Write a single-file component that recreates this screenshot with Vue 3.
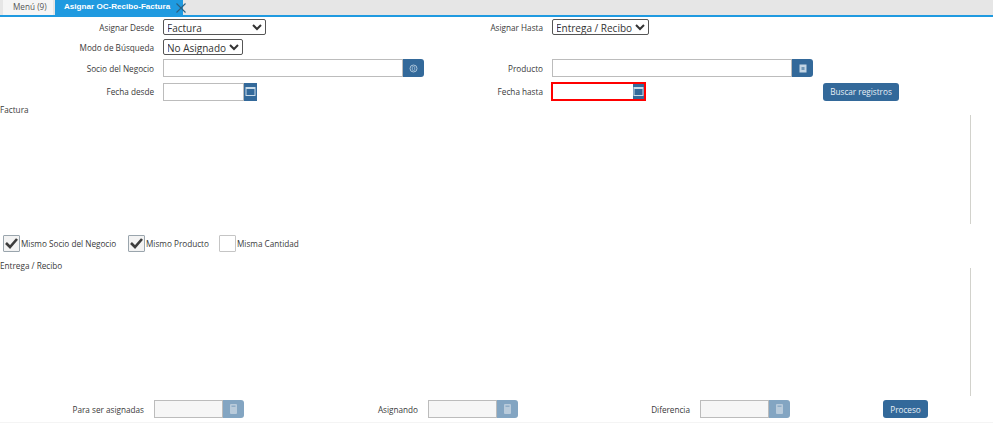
<script setup>
const totals = [
  { label: 'Para ser asignadas', cls: 'w1' },
  { label: 'Asignando', cls: 'w2' },
  { label: 'Diferencia', cls: 'w3' }
]
const checks = [
  { label: 'Mismo Socio del Negocio', on: true },
  { label: 'Mismo Producto', on: true },
  { label: 'Misma Cantidad', on: false }
]
</script>

<template>
  <div class="page">
    <div class="tabs">
      <div class="tab">Menú (9)</div>
      <div class="tab active">
        Asignar OC-Recibo-Factura
        <svg class="close" width="10" height="10" viewBox="0 0 10 10"><path d="M.5.5l9 9M9.5.5l-9 9" stroke="#2c5f80" stroke-width="1.1" fill="none" /></svg>
      </div>
    </div>

    <div class="form">
      <div class="row r1">
        <label>Asignar Desde</label>
        <div class="cell"><select class="s1"><option>Factura</option></select></div>
        <label>Asignar Hasta</label>
        <div class="cell"><select class="s3"><option>Entrega / Recibo</option></select></div>
      </div>
      <div class="row r2">
        <label>Modo de Búsqueda</label>
        <div class="cell"><select class="s2"><option>No Asignado</option></select></div>
      </div>
      <div class="row r3">
        <label>Socio del Negocio</label>
        <div class="cell">
          <input class="in long" />
          <button class="ib wide">
            <svg width="9" height="9" viewBox="0 0 9 9"><circle cx="4.5" cy="4.5" r="3.5" fill="none" stroke="#a9c3d9" /><rect x="3.3" y="2.5" width="2.4" height="4" rx="1" fill="none" stroke="#a9c3d9" stroke-width=".8" /></svg>
          </button>
        </div>
        <label>Producto</label>
        <div class="cell">
          <input class="in long" />
          <button class="ib wide">
            <svg width="8" height="9" viewBox="0 0 8 9"><rect x="0.5" y="0.5" width="7" height="8" fill="#c3d5e4" /><rect x="2.5" y="3" width="3" height="3" fill="#6f97b8" /></svg>
          </button>
        </div>
      </div>
      <div class="row r4">
        <label>Fecha desde</label>
        <div class="cell">
          <input class="in date" />
          <button class="ib cal">
            <svg width="11" height="11" viewBox="0 0 11 11"><rect x="1" y="1.5" width="9" height="8" fill="none" stroke="#c9dbe9" /><rect x="1" y="1.5" width="9" height="1.5" fill="#c9dbe9" /></svg>
          </button>
        </div>
        <label>Fecha hasta</label>
        <div class="cell">
          <div class="focus">
            <input class="in bare" />
            <button class="ib cal">
              <svg width="11" height="11" viewBox="0 0 11 11"><rect x="1" y="1.5" width="9" height="8" fill="none" stroke="#c9dbe9" /><rect x="1" y="1.5" width="9" height="1.5" fill="#c9dbe9" /></svg>
            </button>
          </div>
        </div>
        <button class="btn search">Buscar registros</button>
      </div>
    </div>

    <div class="title t1">Factura</div>
    <div class="grid g1"></div>

    <div class="checks">
      <div v-for="c in checks" :key="c.label" class="check">
        <span class="box" :class="{ on: c.on }">
          <svg v-if="c.on" width="15" height="15" viewBox="0 0 15 15"><path d="M2 7l4 4 7-8" fill="none" stroke="#3c3c3c" stroke-width="2.6" /></svg>
        </span>
        <span>{{ c.label }}</span>
      </div>
    </div>

    <div class="title t2">Entrega / Recibo</div>
    <div class="grid g2"></div>

    <div class="totals">
      <template v-for="t in totals" :key="t.label">
        <label :class="t.cls">{{ t.label }}</label>
        <div class="total">
          <input class="in sum" disabled />
          <button class="ib wide dim">
            <svg width="7" height="10" viewBox="0 0 7 10"><rect x="0" y="0" width="7" height="10" rx="1" fill="#b9cbdb" /><rect x="1.5" y="1.5" width="4" height="1.5" fill="#8fadc7" /></svg>
          </button>
        </div>
      </template>
      <button class="btn process">Proceso</button>
    </div>
  </div>
</template>

<style>
body { margin: 0; background: #fff; }
</style>

<style scoped>
.page {
  width: 993px;
  height: 426px;
  overflow: hidden;
  font-family: "Open Sans", "Noto Sans", sans-serif;
  font-size: 8.2px;
  color: #3a3a3a;
  background: #fff;
  box-sizing: border-box;
}
.tabs {
  display: flex;
  align-items: flex-end;
  height: 15px;
  padding-left: 3px;
  background: #e6e6e6;
  border-bottom: 2px solid #1f9ae0;
  gap: 2px;
}
.tab {
  height: 15px;
  line-height: 14px;
  padding: 0 7px 0 10px;
  background: #f5f5f5;
  color: #555;
  width: 33px;
  white-space: nowrap;
}
.tab.active {
  position: relative;
  width: 110px;
  padding: 0 9px;
  background: #1f9ae0;
  color: #fff;
  font-weight: 700;
  font-size: 8.1px;
  font-family: "Liberation Sans", sans-serif;
}
.close { position: absolute; left: 121px; top: 3px; }
.form { padding-top: 2px; }
.row {
  display: grid;
  grid-template-columns: 154px 276px 113px 280px 1fr;
  align-items: center;
}
.r1 { height: 16px; }
.r2 { height: 16px; margin-top: 4px; }
.r3 { height: 18px; margin-top: 4px; }
.r4 { height: 18px; margin-top: 5px; }
.row label { text-align: right; white-space: nowrap; }
.cell { display: flex; align-items: center; padding-left: 9px; }
select {
  height: 16px;
  box-sizing: border-box;
  padding: 0;
  border: 1px solid #555;
  border-radius: 2px;
  background: #fff;
  color: #333;
  text-indent: -1px;
  font: 10px/14px "Open Sans", sans-serif;
}
.s1 { width: 103px; }
.s2 { width: 80px; }
.s3 { width: 97px; }
.in {
  box-sizing: border-box;
  height: 18px;
  padding: 0;
  border: 1px solid #bcbcbc;
  background: #fff;
  outline: none;
}
.long { width: 240px; }
.date { width: 81px; }
.ib {
  display: flex;
  align-items: center;
  justify-content: center;
  height: 18px;
  padding: 0;
  border: 0;
  background: #33699a;
  border-radius: 0 3px 3px 0;
}
.wide { width: 21px; }
.cal { width: 13px; border-radius: 0; }
.focus {
  display: flex;
  box-sizing: border-box;
  width: 95px;
  height: 19px;
  margin-left: -1px;
  border: 2px solid #f00;
}
.focus .bare { width: 80px; height: 15px; border: 0; }
.focus .ib { height: 15px; }
.btn {
  height: 18px;
  padding: 0;
  border: 0;
  border-radius: 3px;
  background: #33699a;
  color: #e8f0f6;
  font: 8.2px "Open Sans", sans-serif;
}
.search { width: 76px; }
.process { width: 45px; margin-left: 93px; }
.title { height: 12px; line-height: 12px; white-space: nowrap; }
.t1 { margin-top: 4px; }
.grid { width: 970px; border-right: 1px solid #d2d2cc; }
.g1 { height: 109px; margin-top: -1px; }
.checks { display: flex; height: 17px; margin-top: 11px; padding-left: 3px; }
.check { display: flex; align-items: center; gap: 1px; }
.check:nth-child(1) { width: 125px; }
.check:nth-child(2) { width: 91px; }
.box {
  display: flex;
  box-sizing: border-box;
  width: 17px;
  height: 17px;
  align-items: center;
  justify-content: center;
  border: 1px solid #c5c5c5;
  border-radius: 1px;
  background: #fff;
}
.box.on { border-color: #9aa5ad; background: #f3f3f3; }
.t2 { margin-top: 8px; }
.g2 { height: 128px; margin-top: -4px; }
.totals {
  display: flex;
  align-items: center;
  height: 18px;
  margin-top: 4px;
  padding-bottom: 4px;
  border-bottom: 1px solid #f4f4f4;
}
.totals label { text-align: right; white-space: nowrap; margin-right: 10px; }
.w1 { width: 144px; }
.w2 { width: 174px; }
.w3 { width: 172px; }
.total { display: flex; width: 90px; }
.sum { width: 69px; background: #f6f6f6; }
.dim { background: #83a5c2; }
</style>
